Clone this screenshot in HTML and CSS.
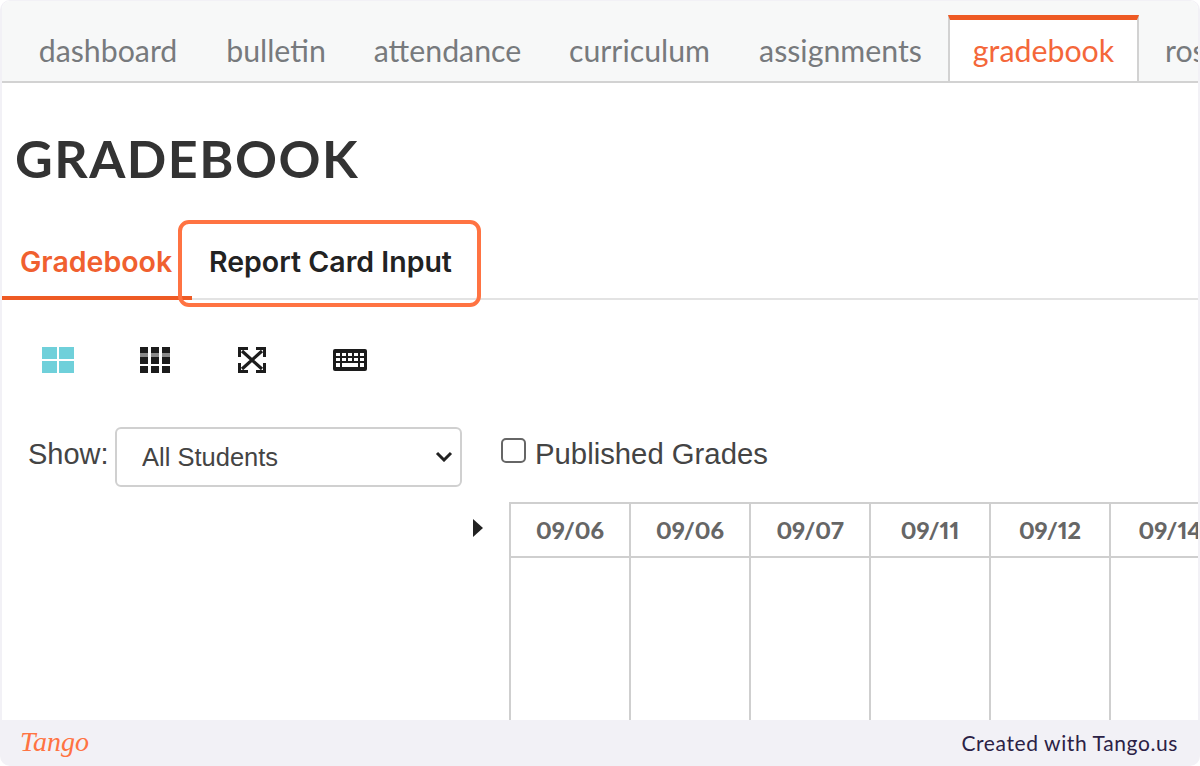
FILE: index.html
```html
<!DOCTYPE html>
<html lang="en">
<head>
<meta charset="utf-8">
<title>Gradebook</title>
<link rel="stylesheet" href="styles.css">
</head>
<body>
<div class="frame">
  <main class="page">
    <nav class="topnav">
      <a class="topnav-item">dashboard</a>
      <a class="topnav-item">bulletin</a>
      <a class="topnav-item">attendance</a>
      <a class="topnav-item">curriculum</a>
      <a class="topnav-item">assignments</a>
      <a class="topnav-item is-active">gradebook</a>
      <a class="topnav-item is-clipped">roster</a>
    </nav>
    <h1 class="title">GRADEBOOK</h1>
    <div class="subtabs">
      <a class="subtab is-active">Gradebook</a>
      <a class="subtab is-highlighted">Report Card Input</a>
    </div>
    <div class="toolbar">
      <svg class="tool tool-a" viewBox="0 0 32 26" width="32" height="26"><g fill="#6fd0da"><rect x="0" y="0" width="15" height="12"/><rect x="17" y="0" width="15" height="12"/><rect x="0" y="14" width="15" height="12"/><rect x="17" y="14" width="15" height="12"/></g></svg>
      <svg class="tool tool-b" viewBox="0 0 32 26" width="32" height="26"><g fill="#8a8a8a"><rect x="1" y="5" width="8" height="6"/><rect x="12" y="5" width="8" height="6"/><rect x="23" y="5" width="8" height="6"/></g><g fill="#1c1c1c"><rect x="1" y="0" width="8" height="6"/><rect x="12" y="0" width="8" height="6"/><rect x="23" y="0" width="8" height="6"/><rect x="1" y="10" width="8" height="7"/><rect x="12" y="10" width="8" height="7"/><rect x="23" y="10" width="8" height="7"/><rect x="1" y="19" width="8" height="7"/><rect x="12" y="19" width="8" height="7"/><rect x="23" y="19" width="8" height="7"/></g></svg>
      <svg class="tool tool-c" viewBox="0 0 28 26" width="28" height="26"><path d="M4 4 L24 22 M24 4 L4 22" stroke="#1c1c1c" stroke-width="3.2" fill="none"/><path d="M1.5 10 V1.5 H10 M18 1.5 H26.5 V10 M1.5 16 V24.5 H10 M18 24.5 H26.5 V16" stroke="#1c1c1c" stroke-width="3" fill="none"/></svg>
      <svg class="tool tool-d" viewBox="0 0 34 22" width="34" height="22"><rect width="34" height="22" rx="2" fill="#1c1c1c"/><g fill="#fff"><rect x="3" y="4" width="4" height="3"/><rect x="9" y="4" width="4" height="3"/><rect x="15" y="4" width="4" height="3"/><rect x="21" y="4" width="4" height="3"/><rect x="27" y="4" width="4" height="3"/><rect x="3" y="9" width="4" height="3"/><rect x="9" y="9" width="4" height="3"/><rect x="15" y="9" width="4" height="3"/><rect x="21" y="9" width="4" height="3"/><rect x="27" y="9" width="4" height="3"/><rect x="3" y="14" width="4" height="4"/><rect x="9" y="14" width="16" height="4"/><rect x="27" y="14" width="4" height="4"/></g></svg>
    </div>
    <div class="filters">
      <label class="show-label" for="show">Show:</label>
      <div class="select-wrap">
        <select id="show" class="select"><option>All Students</option></select>
        <svg class="select-arrow" viewBox="0 0 18 11" width="18" height="11"><path d="M2 2 L9 9 L16 2" stroke="#222" stroke-width="3" fill="none"/></svg>
      </div>
      <label class="published"><input type="checkbox" class="check">Published Grades</label>
    </div>
    <div class="grid-area">
      <svg class="expander" viewBox="0 0 10 18" width="10" height="18"><path d="M0 0 L10 9 L0 18 Z" fill="#222"/></svg>
      <div class="grid">
        <div class="head">09/06</div>
        <div class="head">09/06</div>
        <div class="head">09/07</div>
        <div class="head">09/11</div>
        <div class="head">09/12</div>
        <div class="head">09/14</div>
        <div class="cell"></div>
        <div class="cell"></div>
        <div class="cell"></div>
        <div class="cell"></div>
        <div class="cell"></div>
        <div class="cell"></div>
      </div>
    </div>
  </main>
  <footer class="footer">
    <span class="logo">Tango</span>
    <span class="credit">Created with Tango.us</span>
  </footer>
</div>
</body>
</html>
```
FILE: styles.css
```css
* { box-sizing: border-box; }
html, body { margin: 0; height: 766px; overflow: hidden; background: #fff; }
.frame {
  height: 766px;
  display: flex;
  flex-direction: column;
  background: #f2f1f6;
  border-radius: 10px;
  padding: 1px 2px 0;
  overflow: hidden;
}
.page {
  flex: 1;
  min-height: 0;
  background: #fff;
  overflow: hidden;
  border-radius: 8px 8px 0 0;
}
.topnav {
  height: 82px;
  display: grid;
  grid-template-columns: 190px 146px 197px 187px 215px 191px 60px;
  align-items: end;
  background: #f7f8f8;
  border-bottom: 2px solid #d2d2d2;
  padding-left: 11px;
  overflow: hidden;
  white-space: nowrap;
}
.topnav-item {
  height: 67px;
  padding-top: 16px;
  text-align: center;
  font: 400 30.3px/40px Lato, "Liberation Sans", sans-serif;
  color: #777a7d;
}
.topnav-item.is-active {
  height: 68px;
  margin-bottom: -2px;
  background: #fff;
  color: #f4673a;
  border-top: 5px solid #ee5a24;
  border-left: 2px solid #d2d2d2;
  border-right: 2px solid #d2d2d2;
  padding-top: 10px;
}
.topnav-item.is-clipped { text-align: left; padding-left: 26px; }
.title {
  margin: 47px 0 0 13px;
  font: 700 52px/56px Lato, "Liberation Sans", sans-serif;
  letter-spacing: 1.5px;
  color: #333;
}
.subtabs {
  margin-top: 53px;
  height: 61px;
  display: flex;
  border-bottom: 2px solid #e3e3e3;
}
.subtab {
  position: relative;
  font: 600 28.5px/40px Inter, "Liberation Sans", sans-serif;
  color: #222;
  padding: 3px 0 0;
}
.subtab.is-active {
  flex: none;
  width: 190px;
  padding-left: 18px;
  color: #f0602f;
  height: 61px;
  border-bottom: 4px solid #ee5a24;
  margin-bottom: -2px;
}
.subtab.is-highlighted { margin-left: 17px; }
.subtab.is-highlighted::after {
  content: "";
  box-sizing: border-box;
  position: absolute;
  left: -31px;
  top: -19px;
  width: 303px;
  height: 87px;
  border: 4px solid #ff7342;
  border-radius: 11px;
}
.toolbar {
  height: 26px;
  margin-top: 47px;
  display: flex;
  align-items: center;
  padding-left: 40px;
}
.tool { flex: none; display: block; }
.tool-b { margin-left: 65px; }
.tool-c { margin-left: 67px; }
.tool-d { margin-left: 67px; }
.filters {
  margin-top: 54px;
  height: 60px;
  display: flex;
  align-items: flex-start;
}
.show-label {
  margin: 9px 0 0 26px;
  font: 400 29px/36px "Liberation Sans", sans-serif;
  color: #444;
  width: 87px;
}
.select-wrap { position: relative; width: 347px; height: 60px; }
.select {
  appearance: none;
  width: 100%;
  height: 100%;
  background: #fff;
  border: 2px solid #d0d0d0;
  border-radius: 6px;
  padding: 0 25px;
  font: 400 25.5px "Liberation Sans", sans-serif;
  color: #444;
}
.select-arrow { position: absolute; right: 9px; top: 24px; }
.published {
  display: flex;
  align-items: center;
  margin: 9px 0 0 39px;
  font: 400 29.3px/36px "Liberation Sans", sans-serif;
  color: #444;
}
.check {
  appearance: none;
  margin: 0 9px 7px 0;
  width: 25px;
  height: 25px;
  background: #fff;
  border: 2px solid #666;
  border-radius: 5px;
}
.grid-area {
  margin-top: 15px;
  display: flex;
  align-items: flex-start;
  padding-left: 471px;
}
.expander { flex: none; margin-top: 17px; }
.grid {
  flex: none;
  margin-left: 26px;
  display: grid;
  grid-template-columns: repeat(6, 120px);
  grid-template-rows: 54px 200px;
  border-top: 2px solid #cfcfcf;
  border-left: 2px solid #cfcfcf;
}
.head, .cell {
  border-right: 2px solid #cfcfcf;
}
.head {
  border-bottom: 2px solid #cfcfcf;
  display: flex;
  align-items: center;
  justify-content: center;
  font: 900 23.5px Lato, "Liberation Sans", sans-serif;
  font-variant-numeric: proportional-nums;
  color: #666;
  white-space: nowrap;
}
.footer {
  flex: none;
  height: 46px;
  display: flex;
  align-items: center;
  justify-content: space-between;
  padding: 0 20px 2px 18px;
}
.logo {
  font: italic 400 28px "Liberation Serif", serif;
  color: #ff7342;
}
.credit {
  font: 400 21px Lato, "Noto Sans", sans-serif;
  letter-spacing: 0.6px;
  color: #2b2145;
}
```
